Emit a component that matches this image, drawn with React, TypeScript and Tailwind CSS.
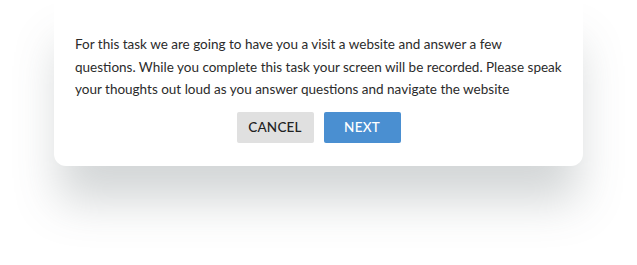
export default function App() {
  return (
    <div className="h-[265px] w-[637px] bg-white" style={{ fontFamily: "Lato, 'Liberation Sans', sans-serif" }}>
      <div className="ml-[54px] w-[529px] rounded-b-xl bg-white px-[21px] pb-[23px] pt-[33px] shadow-[0_40px_45px_-5px_rgba(80,90,95,0.25)]">
        <p className="whitespace-nowrap text-[13.5px] leading-[22.5px] text-[#2b2b2b]">
          For this task we are going to have you a visit a website and answer a few
          <br />
          questions. While you complete this task your screen will be recorded. Please speak
          <br />
          your thoughts out loud as you answer questions and navigate the website
        </p>
        <div className="mt-[11px] flex justify-center gap-[10px]">
          <button className="h-[31px] w-[77px] rounded-[2px] bg-[#e0e0e0] text-[13.5px] font-medium tracking-[0.2px] text-[#222]">
            CANCEL
          </button>
          <button className="h-[31px] w-[77px] rounded-[2px] bg-[#4a8fd1] text-[13.5px] font-medium tracking-[0.2px] text-white">
            NEXT
          </button>
        </div>
      </div>
    </div>
  );
}
